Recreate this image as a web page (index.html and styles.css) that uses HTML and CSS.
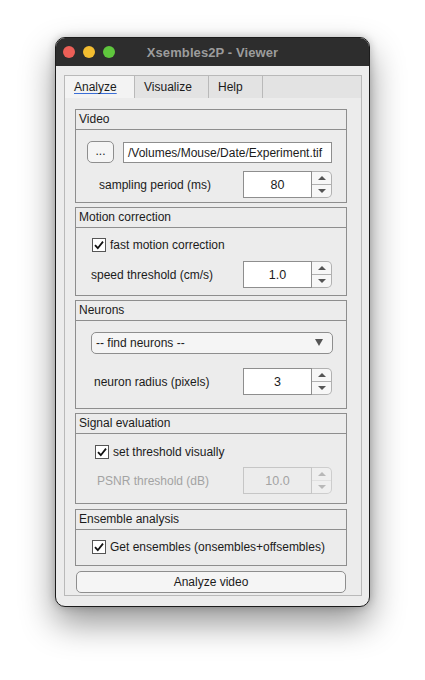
FILE: index.html
```html
<!DOCTYPE html>
<html>
<head>
<meta charset="utf-8">
<link rel="stylesheet" href="styles.css">
</head>
<body>
<div class="window">
  <div class="titlebar">
    <div class="lights">
      <span class="light red"></span>
      <span class="light yellow"></span>
      <span class="light green"></span>
    </div>
    <div class="title">Xsembles2P - Viewer</div>
  </div>
  <div class="content">
    <div class="tabs">
      <div class="tab active t1"><span class="focus">Analyze</span></div>
      <div class="tab t2">Visualize</div>
      <div class="tab t3">Help</div>
      <div class="tab rest"></div>
    </div>
    <div class="tabbody">
      <section class="panel p-video">
        <div class="phead">Video</div>
        <div class="pbody">
          <div class="row filerow">
            <div class="btn small">...</div>
            <div class="field">/Volumes/Mouse/Date/Experiment.tif</div>
          </div>
          <div class="row spinrow l99">
            <span class="lbl">sampling period (ms)</span>
            <div class="spin"><div class="val">80</div><div class="arrows"><span class="up"></span><span class="down"></span></div></div>
          </div>
        </div>
      </section>
      <section class="panel p-motion">
        <div class="phead">Motion correction</div>
        <div class="pbody">
          <div class="row chkrow c92">
            <span class="chk"><svg viewBox="0 0 14 14" width="14" height="14"><path d="M3 7.2 L5.8 10.2 L11 3.6" fill="none" stroke="#111" stroke-width="1.8"/></svg></span>
            <span class="lbl">fast motion correction</span>
          </div>
          <div class="row spinrow l91">
            <span class="lbl">speed threshold (cm/s)</span>
            <div class="spin"><div class="val">1.0</div><div class="arrows"><span class="up"></span><span class="down"></span></div></div>
          </div>
        </div>
      </section>
      <section class="panel p-neurons">
        <div class="phead">Neurons</div>
        <div class="pbody">
          <div class="row droprow">
            <div class="drop"><span>-- find neurons --</span><span class="tri"></span></div>
          </div>
          <div class="row spinrow l94">
            <span class="lbl">neuron radius (pixels)</span>
            <div class="spin"><div class="val">3</div><div class="arrows"><span class="up"></span><span class="down"></span></div></div>
          </div>
        </div>
      </section>
      <section class="panel p-signal">
        <div class="phead">Signal evaluation</div>
        <div class="pbody">
          <div class="row chkrow c95">
            <span class="chk"><svg viewBox="0 0 14 14" width="14" height="14"><path d="M3 7.2 L5.8 10.2 L11 3.6" fill="none" stroke="#111" stroke-width="1.8"/></svg></span>
            <span class="lbl">set threshold visually</span>
          </div>
          <div class="row spinrow l97 disabled">
            <span class="lbl">PSNR threshold (dB)</span>
            <div class="spin"><div class="val">10.0</div><div class="arrows"><span class="up"></span><span class="down"></span></div></div>
          </div>
        </div>
      </section>
      <section class="panel p-ens">
        <div class="phead">Ensemble analysis</div>
        <div class="pbody">
          <div class="row chkrow c92">
            <span class="chk"><svg viewBox="0 0 14 14" width="14" height="14"><path d="M3 7.2 L5.8 10.2 L11 3.6" fill="none" stroke="#111" stroke-width="1.8"/></svg></span>
            <span class="lbl">Get ensembles (onsembles+offsembles)</span>
          </div>
        </div>
      </section>
      <div class="btn big">Analyze video</div>
    </div>
  </div>
</div>
</body>
</html>
```

FILE: styles.css
```css
* { box-sizing: border-box; }
html, body { margin: 0; padding: 0; background: #ffffff; }
body {
  font-family: "Liberation Sans", Arial, sans-serif;
  font-size: 12px;
  color: #1b1b1b;
  padding: 37px 0 0 55px;
  min-height: 680px;
}
.window {
  width: 315px;
  height: 570px;
  border: 1px solid #1c1c1c;
  border-radius: 10px;
  overflow: hidden;
  background: #ececec;
  box-shadow: 0 16px 34px rgba(0,0,0,0.42), 0 0 8px rgba(0,0,0,0.22);
  display: flex;
  flex-direction: column;
}
.titlebar {
  height: 28px;
  background: #2d2d2d;
  position: relative;
  display: flex;
  align-items: center;
  justify-content: center;
  flex: none;
}
.lights {
  position: absolute;
  left: 7px;
  top: 8px;
  display: flex;
  gap: 8px;
}
.light { width: 12px; height: 12px; border-radius: 50%; display: block; }
.red { background: #ec5f57; }
.yellow { background: #f3bd30; }
.green { background: #5fc63d; }
.title {
  color: #9c9c9c;
  font-weight: bold;
  font-size: 13px;
  letter-spacing: 0.1px;
  margin-left: 0;
  margin-top: 1px;
}
.content {
  flex: 1;
  padding: 9px 7px 10px 8px;
  display: flex;
  flex-direction: column;
}
.tabs {
  display: flex;
  height: 23px;
  flex: none;
}
.tab {
  border: 1px solid #b9b9b9;
  border-bottom: none;
  border-left: none;
  background: #e3e3e3;
  padding: 4px 0 0 9px;
  line-height: 14px;
}
.tab.t1 { width: 71px; border-left: 1px solid #b9b9b9; background: #f3f3f3; }
.tab.t2 { width: 74px; }
.tab.t3 { width: 54px; }
.tab.rest { flex: 1; }
.focus {
  text-decoration: underline;
  text-decoration-color: #3a6ed6;
  text-underline-offset: 2px;
}
.tabbody {
  flex: 1;
  border: 1px solid #b9b9b9;
  border-top: none;
  padding: 11px 14px 2px 10px;
  display: flex;
  flex-direction: column;
}
.panel {
  border: 1px solid #8e8e8e;
  display: flex;
  flex-direction: column;
}
.phead {
  height: 20px;
  border-bottom: 1px solid #8e8e8e;
  padding: 2px 0 0 3px;
  line-height: 15px;
}
.p-motion, .p-neurons, .p-signal { margin-top: 4px; }
.p-ens { margin-top: 5px; }
.p-video .pbody { padding: 11px 0 4px 0; }
.p-motion .pbody { padding: 10px 0 7px 0; }
.p-neurons .pbody { padding: 11px 0 13px 0; }
.p-signal .pbody { padding: 11px 0 9px 0; }
.p-ens .pbody { padding: 10px 0 11px 0; }
.row { display: flex; align-items: center; }
.filerow { padding-left: 11px; gap: 9px; }
.spinrow { padding-right: 14px; }
.p-video .spinrow { margin-top: 8px; }
.p-motion .spinrow { margin-top: 9px; }
.p-neurons .spinrow { margin-top: 14px; }
.p-signal .spinrow { margin-top: 8px; }
.l99 { padding-left: 23px; }
.l91 { padding-left: 15px; }
.l94 { padding-left: 18px; }
.l97 { padding-left: 21px; }
.c92 { padding-left: 16px; }
.c95 { padding-left: 19px; }
.btn {
  border: 1px solid #8e8e8e;
  background: #f5f5f5;
  border-radius: 5px;
  display: flex;
  align-items: center;
  justify-content: center;
}
.btn.small { width: 27px; height: 22px; padding-bottom: 2px; }
.btn.big { height: 22px; margin-top: 5px; margin-left: 1px; margin-right: 1px; font-size: 12px; }
.field {
  width: 209px;
  height: 21px;
  background: #ffffff;
  border: 1px solid #8e8e8e;
  padding: 3px 0 0 4px;
  line-height: 14px;
  font-size: 12px;
  white-space: nowrap;
  overflow: hidden;
}
.spin {
  margin-left: auto;
  display: flex;
  height: 27px;
}
.val {
  width: 69px;
  background: #ffffff;
  border: 1px solid #8e8e8e;
  display: flex;
  align-items: center;
  justify-content: center;
  font-size: 12.5px;
}
.arrows {
  width: 20px;
  border: 1px solid #b0b0b0;
  border-left: none;
  border-radius: 0 5px 5px 0;
  background: #f7f7f7;
  display: flex;
  flex-direction: column;
}
.arrows span {
  flex: 1;
  display: flex;
  align-items: center;
  justify-content: center;
}
.arrows .up { border-bottom: 1px solid #b0b0b0; }
.arrows .up::before {
  content: "";
  border-left: 4px solid transparent;
  border-right: 4px solid transparent;
  border-bottom: 4px solid #555;
}
.arrows .down::before {
  content: "";
  border-left: 4px solid transparent;
  border-right: 4px solid transparent;
  border-top: 4px solid #555;
}
.disabled .lbl { color: #a3a3a3; }
.disabled .val { background: #ececec; border-color: #c6c6c6; color: #a3a3a3; }
.disabled .arrows { border-color: #cdcdcd; background: #efefef; }
.disabled .arrows .up { border-bottom-color: #e0e0e0; }
.disabled .arrows .up::before { border-bottom-color: #b8b8b8; }
.disabled .arrows .down::before { border-top-color: #b8b8b8; }
.chkrow { gap: 4px; height: 14px; }
.chk {
  width: 14px;
  height: 14px;
  border: 1px solid #555;
  background: #ffffff;
  display: block;
  position: relative;
}
.chk svg { position: absolute; left: -1px; top: -1px; }
.droprow { padding-left: 15px; }
.drop {
  width: 242px;
  height: 22px;
  border: 1px solid #8e8e8e;
  border-radius: 5px;
  background: #f5f5f5;
  display: flex;
  align-items: center;
  justify-content: space-between;
  padding: 0 9px 0 4px;
}
.tri {
  width: 0; height: 0;
  border-left: 4.5px solid transparent;
  border-right: 4.5px solid transparent;
  border-top: 7px solid #555;
  margin-top: -2px;
}
```
